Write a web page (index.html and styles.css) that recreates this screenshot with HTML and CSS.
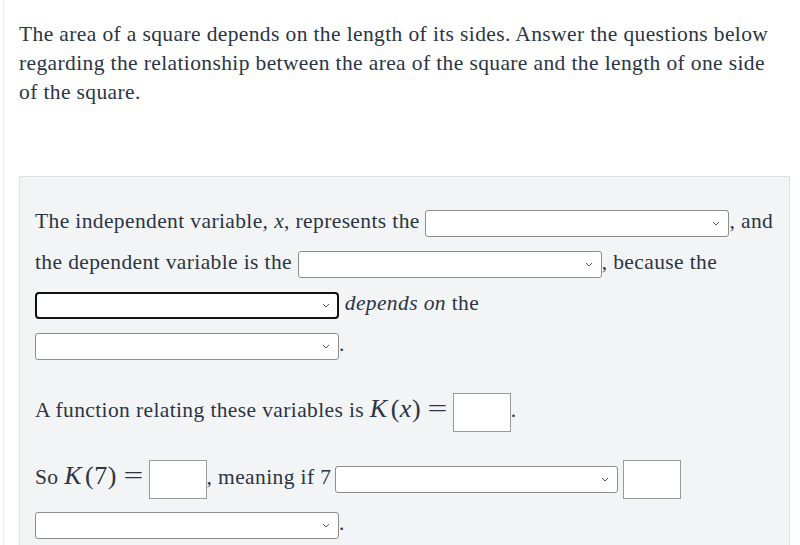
FILE: index.html
```html
<!DOCTYPE html>
<html>
<head>
    <title>Area of a square</title>
    <link rel="stylesheet" href="styles.css">
</head>
<body>

<div class="page">
    <p class="intro">The area of a square depends on the length of its sides. Answer the questions below regarding the relationship between the area of the square and the length of one side of the square.</p>

    <div class="panel">
        <p class="q1">The independent variable, <i>x</i>, represents the <span class="dd w303"><svg width="8" height="5" viewBox="0 0 8 5"><path d="M1 1l3 3 3-3" fill="none" stroke="#555" stroke-width="1"/></svg></span>, and the dependent variable is the <span class="dd w304"><svg width="8" height="5" viewBox="0 0 8 5"><path d="M1 1l3 3 3-3" fill="none" stroke="#555" stroke-width="1"/></svg></span>, because the <span class="dd w304 focus"><svg width="8" height="5" viewBox="0 0 8 5"><path d="M1 1l3 3 3-3" fill="none" stroke="#555" stroke-width="1"/></svg></span> <i>depends on</i> the <span class="dd w304"><svg width="8" height="5" viewBox="0 0 8 5"><path d="M1 1l3 3 3-3" fill="none" stroke="#555" stroke-width="1"/></svg></span>.</p>

        <p class="q2">A function relating these variables is <span class="math"><i class="kv">K</i>(<i>x</i>)</span><span class="math eq">=</span><span class="box"></span>.</p>

        <p class="q3">So <span class="math"><i class="kv">K</i>(7)</span><span class="math eq">=</span><span class="box"></span>, meaning if 7<span class="dd w282 after7"><svg width="8" height="5" viewBox="0 0 8 5"><path d="M1 1l3 3 3-3" fill="none" stroke="#555" stroke-width="1"/></svg></span><span class="box gap"></span> <span class="dd w304"><svg width="8" height="5" viewBox="0 0 8 5"><path d="M1 1l3 3 3-3" fill="none" stroke="#555" stroke-width="1"/></svg></span>.</p>
    </div>
</div>

</body>
</html>
```

FILE: styles.css
```css
body {
    margin: 0;
    background-color: #fff;
    font-family: 'Liberation Serif', 'Times New Roman', serif;
    color: #2b3444;
    overflow: hidden;
}

.page {
    margin-left: 3px;
    border-left: 1px solid #ececec;
    padding: 20px 10px 0 15px;
    height: 545px;
    box-sizing: border-box;
    overflow: hidden;
}

.intro {
    margin: 0;
    font-size: 21.5px;
    line-height: 29px;
    letter-spacing: 0.38px;
    width: 765px;
}

.panel {
    margin-top: 69px;
    width: 739px;
    background-color: #f3f4f6;
    border: 1px solid #dfe1e5;
    border-bottom: none;
    padding: 24px 15px 0 15px;
    font-size: 21.5px;
    letter-spacing: 0.38px;
}

.panel p {
    margin: 0;
}

.panel .q1 {
    line-height: 41px;
}

.panel .q2 {
    margin-top: 20px;
    line-height: 48px;
}

.panel .q3 {
    margin-top: 19px;
    line-height: 46px;
}

.dd {
    display: inline-flex;
    justify-content: flex-end;
    align-items: center;
    height: 27px;
    box-sizing: border-box;
    padding-right: 8px;
    background-color: #fff;
    border: 1px solid #8d8d8d;
    border-radius: 3px;
    vertical-align: middle;
}

.dd.focus {
    border: 2px solid #111;
    border-radius: 4px;
    padding-right: 7px;
}

.dd.after7 {
    margin-left: 4px;
}

.w303 { width: 304px; }
.w304 { width: 304px; }
.w282 { width: 283px; }

.box {
    display: inline-block;
    width: 58px;
    height: 39px;
    box-sizing: border-box;
    background-color: #fff;
    border: 1px solid #9a9a9a;
    vertical-align: middle;
}

.box.gap {
    margin-left: 5px;
}

.math {
    font-size: 26px;
    letter-spacing: 0.5px;
}

.math .kv {
    margin-right: 3px;
}

.math.eq {
    display: inline-block;
    transform: scaleX(1.35);
    margin: 0 8px 0 9px;
    letter-spacing: 0;
}
```
